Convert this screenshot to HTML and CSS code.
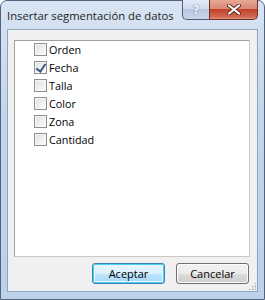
FILE: index.html
```html
<!DOCTYPE html>
<html lang="es">
<head>
  <meta charset="UTF-8">
  <title>Insertar segmentación de datos</title>
  <link rel="stylesheet" href="styles.css">
</head>
<body>
  <div class="window">
    <header class="titlebar">
      <span class="title">Insertar segmentación de datos</span>
      <div class="caption-btns">
        <button class="cap help" title="Ayuda">?</button>
        <button class="cap close" title="Cerrar">
          <svg width="14" height="11" viewBox="0 0 14 11">
            <path d="M2 1.5 L12 9.5 M12 1.5 L2 9.5" stroke="#5a2a22" stroke-width="4" stroke-linecap="round"/>
            <path d="M2 1.5 L12 9.5 M12 1.5 L2 9.5" stroke="#fff" stroke-width="2.2" stroke-linecap="round"/>
          </svg>
        </button>
      </div>
    </header>
    <main class="client">
      <ul class="fields">
        <li><span class="check"></span>Orden</li>
        <li><span class="check on"></span>Fecha</li>
        <li><span class="check"></span>Talla</li>
        <li><span class="check"></span>Color</li>
        <li><span class="check"></span>Zona</li>
        <li><span class="check"></span>Cantidad</li>
      </ul>
      <div class="actions">
        <button class="btn default">Aceptar</button>
        <button class="btn">Cancelar</button>
      </div>
      <i class="grip"></i>
    </main>
  </div>
</body>
</html>
```

FILE: styles.css
```css
* {
  box-sizing: border-box;
}

body {
  margin: 0;
  font-family: "Open Sans", "Noto Sans", sans-serif;
  font-size: 11px;
  color: #000;
  background: #fff;
}

/* window frame */
.window {
  width: 265px;
  height: 300px;
  border: 1px solid #52647c;
  border-radius: 7px 7px 0 0;
  background: linear-gradient(#d7e4f3, #c2d5ec 40%, #bcd1ea);
  padding: 0 6px 7px 6px;
  display: flex;
  flex-direction: column;
}

.titlebar {
  height: 28px;
  display: flex;
  align-items: flex-start;
}
.title {
  font-size: 11.3px;
  line-height: 16px;
  margin-top: 7px;
  color: #1e1e1e;
}
.caption-btns {
  margin-left: auto;
  margin-top: -1px;
  display: flex;
}
.cap {
  height: 20px;
  padding: 0;
  border: 1px solid #4f5f76;
  border-top: none;
  display: flex;
  align-items: center;
  justify-content: center;
}
.help {
  width: 27px;
  border-right: none;
  border-radius: 0 0 0 5px;
  background: linear-gradient(#e3ebf5, #cfdcec 45%, #b7c9df 50%, #c6d6ea);
  font-family: "DejaVu Sans", sans-serif;
  font-weight: bold;
  font-size: 12px;
  color: #f4f7fb;
  text-shadow: 0 0 1px #6a7b92, 0 0 1px #6a7b92;
}
.close {
  width: 49px;
  border-radius: 0 0 5px 0;
  border-color: #6b3027;
  background: linear-gradient(#e9a797, #d98a75 45%, #c2412a 50%, #d36a54 90%, #e19a83);
}

/* client area */
.client {
  flex: 1;
  position: relative;
  background: #f0f0f0;
  border: 1px solid #8fa3bd;
  padding: 10px 7px 7px 6px;
  display: flex;
  flex-direction: column;
}

.fields {
  list-style: none;
  margin: 0;
  height: 217px;
  padding: 0 0 0 19px;
  background: #fff;
  border: 1px solid #a0a0a0;
  border-right-color: #c9c9c9;
  border-bottom-color: #c9c9c9;
  font-size: 10.8px;
}
.fields li {
  height: 18px;
  display: flex;
  align-items: center;
  gap: 2px;
  line-height: 13px;
}
.fields li:first-child {
  margin-top: -1px;
}
.check {
  width: 13px;
  height: 13px;
  border: 1px solid #8f8f8f;
  background: linear-gradient(135deg, #e0e0e0, #f7f7f7 80%);
  box-shadow: inset 0 0 0 1px #f6f6f6;
  flex: none;
  position: relative;
}
.check.on::after {
  content: '';
  position: absolute;
  left: 3px;
  top: 0;
  width: 4px;
  height: 8px;
  border: solid #3b5580;
  border-width: 0 2px 2px 0;
  transform: rotate(35deg);
}

.actions {
  margin-top: 6px;
  display: flex;
  justify-content: flex-end;
  gap: 11px;
  padding-right: 1px;
}
.btn {
  width: 73px;
  height: 21px;
  font-family: inherit;
  font-size: 11px;
  color: #000;
  border: 1px solid #707070;
  border-radius: 3px;
  background: linear-gradient(#f2f2f2, #ebebeb 50%, #dddddd 50%, #cfcfcf);
  box-shadow: inset 0 0 0 1px #fcfcfc;
  padding: 0;
}
.btn.default {
  border-color: #3c7fb1;
  background: linear-gradient(#eaf6fd, #d9f0fc 50%, #bee6fd 50%, #a7d9f5);
  box-shadow: inset 0 0 0 1px #48d1f9, inset 0 0 0 2px #e8f6fd;
}

/* resize grip */
.grip {
  position: absolute;
  right: 1px;
  bottom: 1px;
  width: 8px;
  height: 8px;
  background:
    radial-gradient(circle, #b6b6b6 0.8px, transparent 1.2px) 0 0 / 3px 3px;
  clip-path: polygon(100% 0, 100% 100%, 0 100%);
}
```
